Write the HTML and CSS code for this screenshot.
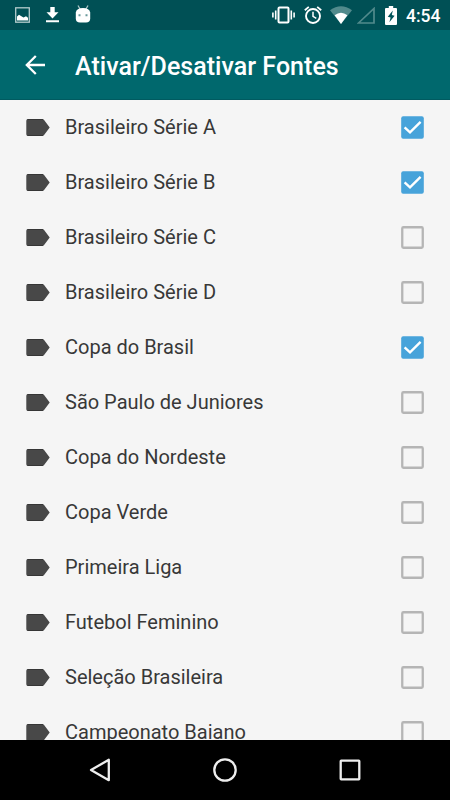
FILE: index.html
```html
<!DOCTYPE html>
<html lang="pt-BR">
<head>
<meta charset="utf-8">
<title>Ativar/Desativar Fontes</title>
<link rel="stylesheet" href="styles.css">
</head>
<body>
<svg class="defs" aria-hidden="true">
  <symbol id="tag" viewBox="0 0 24 17"><path d="M2 0h14.300q1 0 1.600.8L23.700 8.500l-5.800 7.700q-.6.8-1.600.8H2Q.3 17 .3 15.300V1.700Q.3 0 2 0Z" fill="#484848"/><path d="M1.300.4H17M1.300 16.600H17" stroke="#303030" stroke-width=".8"/></symbol>
  <symbol id="off" viewBox="0 0 23 23"><rect x="1.250" y="1.250" width="20.500" height="20.500" rx="1.200" fill="none" stroke="#b5b5b5" stroke-width="2.300"/></symbol>
  <symbol id="on" viewBox="0 0 23 23"><rect x=".2" y=".2" width="22.600" height="22.600" rx="2" fill="#47a3da"/><path d="M3.600 11.300 9 16.300 19.600 5.900" fill="none" stroke="#fff" stroke-width="2.400"/></symbol>
</svg>
<div class="screen">
  <header class="status">
    <div class="notices">
      <svg width="15" height="16" viewBox="0 0 15 16"><rect x=".7" y=".8" width="13.600" height="14.400" fill="none" stroke="#b4cccd" stroke-width="1.300"/><path d="M2 13.500V9.500l2-1.700 2 1.200L8.500 10.500l2.500-1.300 2 1.600v2.700Z" fill="#fff"/></svg>
      <svg width="13" height="16" viewBox="0 0 13 16"><path d="M4.300 0h4.400v5.300h3.800L6.500 11.500.5 5.300h3.800ZM0 13.300h13v2H0Z" fill="#fff"/></svg>
      <svg width="16" height="18" viewBox="0 0 16 18"><path d="M3 .5l2 3.500M13 .5l-2 3.500" stroke="#a9c4c6" stroke-width="1.300"/><path d="M.8 7.500Q1.500 3 8 3t7.200 4.500v6Q15.200 17.500 11 17.500H5Q.8 17.500.8 13.500Z" fill="#fff"/><path d="M3.500 9.300h2v2h-2ZM10.500 9.300h2v2h-2Z" fill="#68999b"/></svg>
    </div>
    <div class="system">
      <svg width="23" height="18" viewBox="0 0 23 18"><rect x="6.500" y="1.500" width="10" height="15" rx="1" fill="none" stroke="#fff" stroke-width="2"/><path d="M3.700 4.500v9M19.300 4.500v9M.9 6.500v5M22.100 6.500v5" stroke="#fff" stroke-width="1.600"/></svg>
      <svg width="18" height="18" viewBox="0 0 18 18" fill="none" stroke="#fff"><circle cx="9" cy="10" r="7" stroke-width="1.900"/><path d="M9 5.800V10.300l3.300 2" stroke-width="1.500"/><path d="m.8 4.300 4-3.400M17.200 4.300l-4-3.400" stroke-width="1.800"/></svg>
      <svg width="22" height="18" viewBox="0 0 22 18"><path d="M0 4.200Q11-3.800 22 4.200L11 18Z" fill="#518a8c"/><path d="M4.600 9.300Q11 4.300 17.400 9.300L11 18Z" fill="#fff"/></svg>
      <svg width="18" height="17" viewBox="0 0 18 17"><path d="M1.500 16 17 1.500V16Z" fill="none" stroke="#518a8c" stroke-width="1.700"/></svg>
      <svg width="12" height="19" viewBox="0 0 12 19"><path d="M3.800 0h4.400v2H11q1 0 1 1v15q0 1-1 1H1q-1 0-1-1V3q0-1 1-1h2.800Z" fill="#fff"/><path d="M7.800 4.500 2.800 10.800 5.600 11.600 4.400 16.300 9.600 9.800 6.800 9Z" fill="#00545a"/></svg>
      <time>4:54</time>
    </div>
  </header>
  <div class="toolbar">
    <svg width="20" height="20" viewBox="0 0 20 20" fill="none" stroke="#fff" stroke-width="2.300"><path d="M20 10H2M10.800 1 1.800 10l9 9"/></svg>
    <h1>Ativar/Desativar Fontes</h1>
  </div>
  <ul class="list">
    <li><svg class="tag"><use href="#tag"/></svg><span>Brasileiro Série A</span><svg class="box"><use href="#on"/></svg></li>
    <li><svg class="tag"><use href="#tag"/></svg><span>Brasileiro Série B</span><svg class="box"><use href="#on"/></svg></li>
    <li><svg class="tag"><use href="#tag"/></svg><span>Brasileiro Série C</span><svg class="box"><use href="#off"/></svg></li>
    <li><svg class="tag"><use href="#tag"/></svg><span>Brasileiro Série D</span><svg class="box"><use href="#off"/></svg></li>
    <li><svg class="tag"><use href="#tag"/></svg><span>Copa do Brasil</span><svg class="box"><use href="#on"/></svg></li>
    <li><svg class="tag"><use href="#tag"/></svg><span>São Paulo de Juniores</span><svg class="box"><use href="#off"/></svg></li>
    <li><svg class="tag"><use href="#tag"/></svg><span>Copa do Nordeste</span><svg class="box"><use href="#off"/></svg></li>
    <li><svg class="tag"><use href="#tag"/></svg><span>Copa Verde</span><svg class="box"><use href="#off"/></svg></li>
    <li><svg class="tag"><use href="#tag"/></svg><span>Primeira Liga</span><svg class="box"><use href="#off"/></svg></li>
    <li><svg class="tag"><use href="#tag"/></svg><span>Futebol Feminino</span><svg class="box"><use href="#off"/></svg></li>
    <li><svg class="tag"><use href="#tag"/></svg><span>Seleção Brasileira</span><svg class="box"><use href="#off"/></svg></li>
    <li><svg class="tag"><use href="#tag"/></svg><span>Campeonato Baiano</span><svg class="box"><use href="#off"/></svg></li>
  </ul>
  <nav class="navbar">
    <svg width="24" height="24" viewBox="0 0 24 24"><path d="M20.800 1.800v20.400L3 12Z"/></svg>
    <svg width="24" height="24" viewBox="0 0 24 24"><circle cx="12" cy="12" r="10.700"/></svg>
    <svg width="24" height="24" viewBox="0 0 24 24"><rect x="2.700" y="2.700" width="18.600" height="18.600" rx=".5"/></svg>
  </nav>
</div>
</body>
</html>
```
FILE: styles.css
```css
* { box-sizing: border-box; }
body { margin: 0; font-family: Roboto, "Noto Sans", sans-serif; }
svg { display: block; flex: none; }
.defs { display: none; }
.screen {
  display: flex;
  flex-direction: column;
  width: 450px;
  height: 800px;
  overflow: hidden;
  background: #f5f5f5;
}
.status {
  display: flex;
  flex: none;
  justify-content: space-between;
  height: 30px;
  padding: 0 10px 0 15px;
  background: #005055;
}
.notices, .system { display: flex; align-items: center; }
.notices { gap: 16px; }
.notices svg:last-child { margin-top: -3px; }
.system { gap: 9px; }
.system svg:nth-child(3) { margin-left: -1px; }
.system svg:nth-child(4) { margin: 0 1px 0 -4px; }
.system time {
  width: 34px;
  padding-top: 2px;
  color: #fff;
  font-size: 17.5px;
  font-weight: 500;
  line-height: 30px;
  white-space: nowrap;
}
.toolbar {
  display: flex;
  flex: none;
  align-items: center;
  gap: 30px;
  height: 70px;
  padding: 0 25px;
  border-bottom: 1px solid #005a60;
  background: #00686d;
}
.toolbar h1 {
  margin: 5px 0 0;
  color: #fff;
  font-size: 25px;
  font-weight: 500;
  letter-spacing: 0.03px;
  line-height: 30px;
  white-space: nowrap;
}
.list {
  flex: 1;
  min-height: 0;
  margin: 0;
  padding: 0;
  overflow: hidden;
  list-style: none;
}
.list li {
  display: flex;
  align-items: center;
  height: 55px;
  padding: 0 26px;
}
.list span {
  flex: 1;
  margin: 0 0 2px 15px;
  color: #383838;
  font-size: 20px;
  line-height: 24px;
}
.tag { width: 24px; height: 17px; }
.box { width: 23px; height: 23px; }
.navbar {
  display: flex;
  flex: none;
  align-items: center;
  justify-content: center;
  gap: 101px;
  height: 60px;
  background: #000;
}
.navbar svg { fill: none; stroke: #eee; stroke-width: 2.3; stroke-linejoin: round; }
```
